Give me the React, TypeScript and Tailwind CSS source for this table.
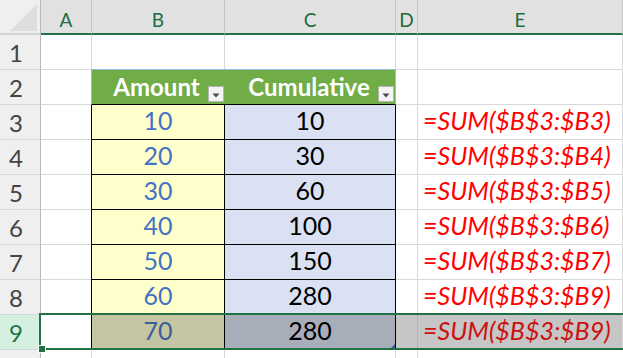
import React from "react";

const font = { fontFamily: "Lato, 'Noto Sans', sans-serif" };

const rows = [
  { a: 10, c: 10, f: "=SUM($B$3:$B3)" },
  { a: 20, c: 30, f: "=SUM($B$3:$B4)" },
  { a: 30, c: 60, f: "=SUM($B$3:$B5)" },
  { a: 40, c: 100, f: "=SUM($B$3:$B6)" },
  { a: 50, c: 150, f: "=SUM($B$3:$B7)" },
  { a: 60, c: 280, f: "=SUM($B$3:$B9)" },
  { a: 70, c: 280, f: "=SUM($B$3:$B9)" },
];

function Drop() {
  return (
    <div className="absolute right-[1px] bottom-[2px] w-[16px] h-[16px] bg-[#f4f4f4] border border-[#b4b4b4] flex items-center justify-center">
      <svg width="8" height="5" viewBox="0 0 8 5" className="mt-[3px]">
        <path d="M0.5 0.5 L7.5 0.5 L4 4.5 Z" fill="#4a4a4a" />
      </svg>
    </div>
  );
}

export default function App() {
  const grid = "border-r border-b border-[#d9d9d9]";
  const rowHdr = "border-r border-r-[#b9b9b9] border-b border-b-[#d7d7d7] bg-[#efefef] text-[24px] text-[#444444] flex items-end pl-[9px] pb-[4px] leading-none";
  const colHdr = "border-r border-r-[#c4c4c4] border-b-2 border-b-[#217346] bg-[#e1e1e1] text-[19px] text-[#1d6b41] flex items-center justify-center leading-none pt-[5px]";
  const cellText = "flex items-end pb-[6px] leading-none text-[25px]";
  return (
    <div style={font} className="relative w-[623px] h-[358px] overflow-hidden bg-white select-none">
      <div className="grid grid-cols-[41px_51px_133px_171px_22px_1fr] grid-rows-[35px_repeat(9,35px)_1fr] h-full">
        {/* header row */}
        <div className="relative border-r border-r-[#b9b9b9] border-b-2 border-b-[#d2d2d2] bg-[#efefef]">
          <svg width="41" height="35" className="absolute left-0 top-0">
            <path d="M10 31 L37 31 L37 4 Z" fill="#dedede" />
          </svg>
        </div>
        {["A", "B", "C", "D", "E"].map((l) => (
          <div key={l} className={colHdr}>{l}</div>
        ))}

        {/* row 1 */}
        <div className={rowHdr}>1</div>
        <div className={grid} />
        <div className={grid} />
        <div className={grid} />
        <div className={grid} />
        <div className={grid} />

        {/* row 2 */}
        <div className={rowHdr}>2</div>
        <div className={grid} />
        <div className="relative bg-[#70ad47] border-l border-t border-[#9fb8de] -ml-[1px] -mt-[1px] border-b border-b-black flex items-end justify-center pb-[5px] pr-[4px] text-white font-bold text-[24px] leading-none">
          Amount
          <Drop />
        </div>
        <div className="relative bg-[#70ad47] border-r border-t border-[#9fb8de] -mt-[1px] border-b border-b-black flex items-end justify-center pb-[5px] pr-[2px] text-white font-bold text-[24px] leading-none">
          Cumulative
          <Drop />
        </div>
        <div className={grid} />
        <div className={grid} />

        {rows.map((r, i) => {
          const sel = i === 6;
          const n = i + 3;
          return (
            <React.Fragment key={n}>
              <div
                className={
                  sel
                    ? "border-r border-[#217346] border-b border-b-[#d7d7d7] bg-[#d3f0e0] text-[24px] text-[#217346] flex items-end pl-[9px] pb-[4px] leading-none"
                    : rowHdr
                }
              >
                {n}
              </div>
              <div className={grid} />
              <div
                className={`-ml-[1px] border-l border-r border-b border-black justify-center ${cellText} ${
                  sel ? "bg-[#c5c5a1] text-[#3a5e9e]" : "bg-[#ffffcc] text-[#4472c4]"
                }`}
              >
                {r.a}
              </div>
              <div
                className={`relative border-r border-b border-black justify-center ${cellText} ${
                  sel ? "bg-[#a8adba] text-black" : "bg-[#d9e1f2] text-black"
                }`}
              >
                {r.c}
                {sel && (
                  <svg width="5" height="5" className="absolute right-0 bottom-0">
                    <path d="M5 0 L5 5 L0 5 Z" fill="#3b5998" />
                  </svg>
                )}
              </div>
              <div className={`${grid} ${sel ? "bg-[#c6c6c6] border-r-[#b3b3b3]" : ""}`} />
              <div
                className={`${grid} ${cellText} pl-[5px] italic text-[24px] whitespace-nowrap ${
                  sel ? "bg-[#c6c6c6] text-[#cc1010]" : "text-[#ff0000]"
                }`}
              >
                {r.f}
              </div>
            </React.Fragment>
          );
        })}

        {/* trailing row */}
        <div className="border-r border-r-[#b9b9b9] bg-[#efefef]" />
        <div className="border-r border-[#d9d9d9]" />
        <div className="border-r border-[#d9d9d9]" />
        <div className="border-r border-[#d9d9d9]" />
        <div className="border-r border-[#d9d9d9]" />
        <div />
      </div>

      {/* selection overlay */}
      <div className="absolute left-[39px] top-[313px] w-[600px] h-[37px] border-2 border-[#217346] pointer-events-none" />
      <div className="absolute left-[38px] top-[345px] w-[8px] h-[8px] bg-[#217346] border border-white pointer-events-none" />
    </div>
  );
}
